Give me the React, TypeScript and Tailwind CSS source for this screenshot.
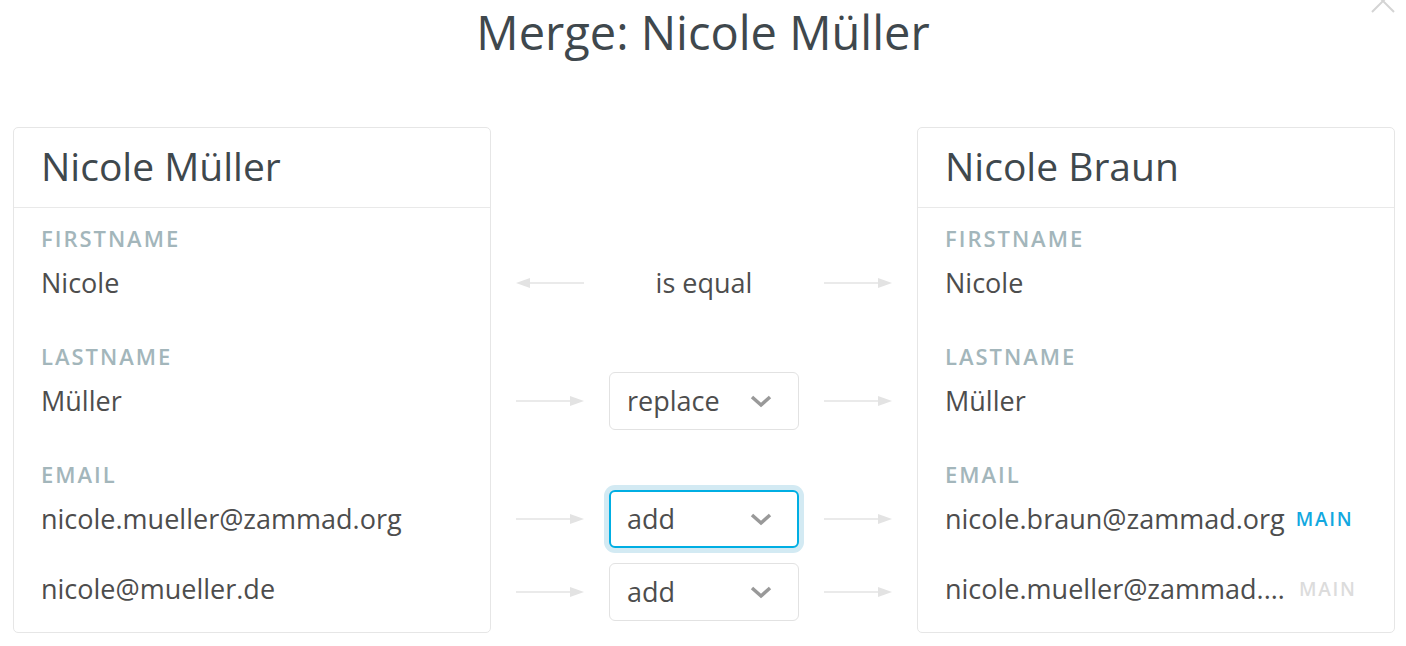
/**
 * Merge dialog — compares two user records field by field and lets the
 * agent pick how each value is carried over.
 */
const FONT = { fontFamily: '"Open Sans", "Noto Sans", Arial, sans-serif' };

function Arrow({ dir = 'right' }: { dir?: 'left' | 'right' }) {
  return (
    <svg width="68" height="12" viewBox="0 0 68 12" className="shrink-0">
      {dir === 'right' ? (
        <>
          <line x1="0" y1="6" x2="56" y2="6" stroke="#e3e3e3" strokeWidth="1.5" />
          <polygon points="54,1 68,6 54,11" fill="#e3e3e3" />
        </>
      ) : (
        <>
          <line x1="12" y1="6" x2="68" y2="6" stroke="#e3e3e3" strokeWidth="1.5" />
          <polygon points="14,1 0,6 14,11" fill="#e3e3e3" />
        </>
      )}
    </svg>
  );
}

function Chevron() {
  return (
    <svg width="22" height="14" viewBox="0 0 22 14" className="shrink-0">
      <polyline points="2,3 11,11 20,3" fill="none" stroke="#999999" strokeWidth="3.5" />
    </svg>
  );
}

function Select({ value, focused }: { value: string; focused?: boolean }) {
  return (
    <div
      className={
        focused
          ? 'w-[190px] h-[58px] rounded-[6px] border-2 border-[#00aee3] shadow-[0_0_0_5px_#d3eaf3] flex items-center justify-between pl-[16px] pr-[25px] bg-white'
          : 'w-[190px] h-[58px] rounded-[6px] border border-[#e2e2e2] flex items-center justify-between pl-[17px] pr-[26px] bg-white'
      }
    >
      <span className="text-[27px] text-[#4d4d4d]">{value}</span>
      <Chevron />
    </div>
  );
}

function Label({ children }: { children?: React.ReactNode }) {
  return (
    <div className="h-[32px] leading-[32px] text-[22px] font-semibold tracking-[0.09em] text-[#a3b6bb] uppercase">
      {children}
    </div>
  );
}

function Value({ children }: { children?: React.ReactNode }) {
  return <div className="h-[58px] leading-[58px] text-[27px] text-[#4d4d4d] whitespace-nowrap">{children}</div>;
}

function Email({ address, main }: { address: string; main: boolean }) {
  return (
    <div className="h-[58px] flex items-center gap-[11px] text-[#4d4d4d] whitespace-nowrap">
      <span className="text-[27px] max-w-[343px] truncate">{address}</span>
      <span
        className={
          main
            ? 'text-[19px] font-semibold tracking-[0.09em] text-[#12a8e0]'
            : 'text-[19px] font-semibold tracking-[0.09em] text-[#dcdcdc]'
        }
      >
        MAIN
      </span>
    </div>
  );
}

function Card({ name, children }: { name: string; children: React.ReactNode }) {
  return (
    <div className="w-[478px] shrink-0 rounded-[5px] border border-[#e6e6e6]">
      <div className="h-[80px] border-b border-[#e9e9e9] px-[27px] flex items-center pb-[3px]">
        <h2 className="text-[39px] text-[#3f484d]">{name}</h2>
      </div>
      <div className="px-[27px] pt-[14px] pb-[14px]">{children}</div>
    </div>
  );
}

function Gap({ h }: { h: string }) {
  return <div className={h} />;
}

export default function App() {
  return (
    <div className="relative w-full h-[646px] overflow-hidden bg-white" style={FONT}>
      {/* close */}
      <svg width="26" height="26" viewBox="0 0 26 26" className="absolute -top-[12px] right-[10px]">
        <path d="M2 2 L24 24 M24 2 L2 24" stroke="#d4d4d4" strokeWidth="2" />
      </svg>

      <h1 className="h-[64px] leading-[64px] text-center text-[47px] text-[#3f484d]">Merge: Nicole Müller</h1>

      <div className="mt-[63px] flex pl-[13px]">
        <Card name="Nicole Müller">
          <Label>Firstname</Label>
          <Value>Nicole</Value>
          <Gap h="h-[28px]" />
          <Label>Lastname</Label>
          <Value>Müller</Value>
          <Gap h="h-[28px]" />
          <Label>Email</Label>
          <Value>nicole.mueller@zammad.org</Value>
          <Gap h="h-[12px]" />
          <Value>nicole@mueller.de</Value>
        </Card>

        {/* actions */}
        <div className="w-[426px] shrink-0 pt-[95px] px-[25px]">
          <div className="h-[32px]" />
          <div className="h-[58px] flex items-center justify-between">
            <Arrow dir="left" />
            <span className="text-[27px] text-[#4d4d4d]">is equal</span>
            <Arrow />
          </div>
          <Gap h="h-[28px]" />
          <div className="h-[32px]" />
          <div className="h-[58px] flex items-center justify-between">
            <Arrow />
            <Select value="replace" />
            <Arrow />
          </div>
          <Gap h="h-[28px]" />
          <div className="h-[32px]" />
          <div className="h-[58px] flex items-center justify-between">
            <Arrow />
            <Select value="add" focused />
            <Arrow />
          </div>
          <Gap h="h-[12px]" />
          <div className="h-[58px] flex items-center justify-between translate-y-[3px]">
            <Arrow />
            <Select value="add" />
            <Arrow />
          </div>
        </div>

        <Card name="Nicole Braun">
          <Label>Firstname</Label>
          <Value>Nicole</Value>
          <Gap h="h-[28px]" />
          <Label>Lastname</Label>
          <Value>Müller</Value>
          <Gap h="h-[28px]" />
          <Label>Email</Label>
          <Email address="nicole.braun@zammad.org" main />
          <Gap h="h-[12px]" />
          <Email address="nicole.mueller@zammad.org" main={false} />
        </Card>
      </div>
    </div>
  );
}
